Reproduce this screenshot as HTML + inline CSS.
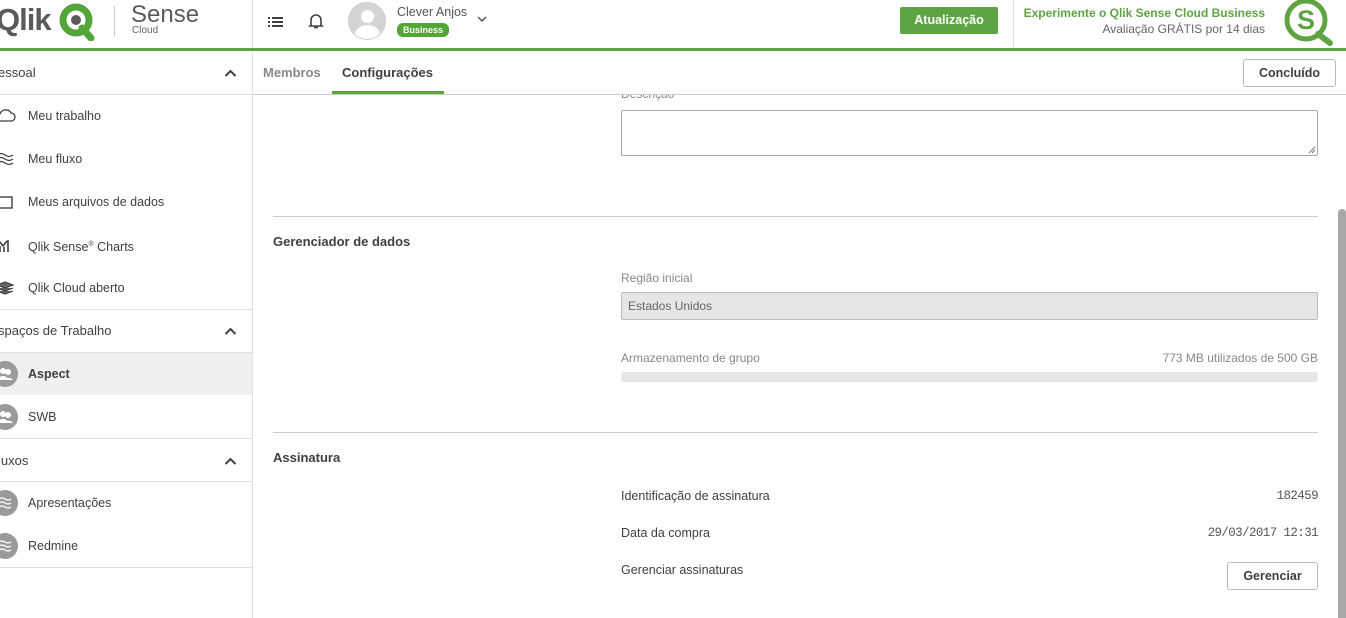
<!DOCTYPE html>
<html><head><meta charset="utf-8"><style>
*{margin:0;padding:0;box-sizing:border-box}
body{width:1346px;height:618px;overflow:hidden;background:#fff;font-family:"Liberation Sans",sans-serif;color:#404040;position:relative;font-size:13px}
.a{position:absolute;white-space:nowrap}
.hl{position:absolute;height:1px;background:#e0e0e0}
.vl{position:absolute;width:1px;background:#e0e0e0}
.nav{position:absolute;left:28px;font-size:12.5px;color:#404040}
.ic{position:absolute;left:-8px;width:26px;height:26px;border-radius:50%;background:#9a9a9a}
.lbl{font-size:12px;color:#888}
.chev{position:absolute;left:224px}
.mono{font-size:12.5px;letter-spacing:-0.6px;font-family:'Liberation Mono',monospace;color:#555}
</style></head><body>
<!-- header -->
<div class="a" style="left:-4px;top:2px;font-size:31px;font-weight:bold;color:#5a5a5a;letter-spacing:-1px">Qlik</div>
<svg class="a" style="left:58px;top:3px" width="40" height="38" viewBox="0 0 40 38"><circle cx="18" cy="17" r="13" fill="none" stroke="#52a536" stroke-width="7"/><path d="M24 25 L33 35" stroke="#52a536" stroke-width="7" stroke-linecap="round"/><circle cx="18" cy="17" r="5" fill="#5a5a5a"/></svg>
<div class="vl" style="left:114px;top:6px;height:30px;background:#ccc"></div>
<div class="a" style="left:131px;top:1px;font-size:24px;color:#5a5a5a">Sense</div>
<div class="a" style="left:132px;top:25px;font-size:10px;color:#666">Cloud</div>
<div class="vl" style="left:252px;top:0;height:48px"></div>
<svg class="a" style="left:268px;top:15px" width="16" height="14" viewBox="0 0 16 14"><g fill="#404040"><rect x="0" y="2" width="2" height="2"/><rect x="4" y="2" width="11" height="2"/><rect x="0" y="6" width="2" height="2"/><rect x="4" y="6" width="11" height="2"/><rect x="0" y="10" width="2" height="2"/><rect x="4" y="10" width="11" height="2"/></g></svg>
<svg class="a" style="left:308px;top:12px" width="16" height="18" viewBox="0 0 16 18"><path d="M3 13 V8 a5 5 0 0 1 10 0 V13 L14 14 H2 Z" fill="none" stroke="#404040" stroke-width="1.6"/><path d="M6 15.5 h4" stroke="#404040" stroke-width="1.6"/></svg>
<div class="a" style="left:348px;top:2px;width:38px;height:38px;border-radius:50%;background:#d4d4d4;overflow:hidden;border:1px solid #ccc"><div style="position:absolute;left:12px;top:7px;width:13px;height:13px;border-radius:50%;background:#fff"></div><div style="position:absolute;left:6px;top:22px;width:25px;height:20px;border-radius:50%;background:#fff"></div></div>
<div class="a" style="left:397px;top:5px;font-size:12.5px;color:#555">Clever Anjos</div>
<div class="a" style="left:397px;top:23px;background:#52a536;color:#fff;font-size:9px;font-weight:bold;padding:2px 6px;border-radius:6px">Business</div>
<svg class="a" style="left:477px;top:16px" width="10" height="7"><path d="M1 1 L5 5 L9 1" fill="none" stroke="#555" stroke-width="1.5"/></svg>
<div class="a" style="left:900px;top:7px;width:98px;height:27px;background:#5ea443;border-radius:2px;color:#fff;font-weight:bold;font-size:12.5px;text-align:center;line-height:27px">Atualização</div>
<div class="vl" style="left:1013px;top:0;height:48px"></div>
<div class="a" style="right:81px;top:6px;font-size:12px;font-weight:bold;color:#5ea443">Experimente o Qlik Sense Cloud Business</div>
<div class="a" style="right:81px;top:22px;font-size:12px;color:#666">Avaliação GRÁTIS por 14 dias</div>
<svg class="a" style="left:1282px;top:-2px" width="60" height="48" viewBox="0 0 60 48"><circle cx="24" cy="22" r="19" fill="none" stroke="#5ea443" stroke-width="5"/><path d="M36 36 L48 45" stroke="#5ea443" stroke-width="6" stroke-linecap="round"/><text x="24" y="31" text-anchor="middle" font-family="Liberation Sans" font-weight="bold" font-size="27" fill="#5ea443">S</text></svg>
<div class="a" style="left:0;top:48px;width:1346px;height:3px;background:#5ea443"></div>
<!-- sidebar -->
<div class="vl" style="left:252px;top:51px;height:567px"></div>
<div class="a" style="left:-2px;top:65px;font-size:13px">essoal</div>
<svg class="chev" style="top:69px" width="13" height="8"><path d="M1.5 7 L6.5 2 L11.5 7" fill="none" stroke="#404040" stroke-width="2"/></svg>
<div class="hl" style="left:0;top:94px;width:252px"></div>
<svg class="a" style="left:-6px;top:108px" width="22" height="16"><path d="M4 13 H17 a4 4 0 0 0 0-8 a6 6 0 0 0-11 1 a4 4 0 0 0-2 7z" fill="none" stroke="#404040" stroke-width="1.3"/></svg>
<div class="nav" style="top:109px">Meu trabalho</div>
<svg class="a" style="left:-4px;top:152px" width="18" height="14"><path d="M1 3 q4-3 8 0 t8 0 M1 7 q4-3 8 0 t8 0 M1 11 q4-3 8 0 t8 0" fill="none" stroke="#404040" stroke-width="1.3"/></svg>
<div class="nav" style="top:152px">Meu fluxo</div>
<svg class="a" style="left:-4px;top:195px" width="18" height="14"><rect x="1" y="2" width="15" height="11" fill="none" stroke="#404040" stroke-width="1.4"/></svg>
<div class="nav" style="top:195px">Meus arquivos de dados</div>
<svg class="a" style="left:-2px;top:238px" width="14" height="16"><path d="M1 3 L5 8 L9 3 M2 14 V8 M6 14 V9 M10 14 V2" fill="none" stroke="#404040" stroke-width="1.6"/></svg>
<div class="nav" style="top:240px">Qlik Sense<sup style="font-size:7px">®</sup> Charts</div>
<svg class="a" style="left:-4px;top:280px" width="20" height="16"><path d="M1 5 l8-3 8 3-8 3z M1 8 l8 3 8-3 M1 11 l8 3 8-3" fill="#666" stroke="#404040" stroke-width="1.2"/></svg>
<div class="nav" style="top:281px">Qlik Cloud aberto</div>
<div class="hl" style="left:0;top:309px;width:252px"></div>
<div class="a" style="left:-2px;top:323px;font-size:13px">spaços de Trabalho</div>
<svg class="chev" style="top:327px" width="13" height="8"><path d="M1.5 7 L6.5 2 L11.5 7" fill="none" stroke="#404040" stroke-width="2"/></svg>
<div class="hl" style="left:0;top:352px;width:252px"></div>
<div class="a" style="left:0;top:353px;width:252px;height:42px;background:#f0f0f0"></div>
<div class="ic" style="top:361px"></div>
<svg class="a" style="left:-2px;top:367px" width="16" height="14"><circle cx="5" cy="4" r="3" fill="#fff"/><circle cx="10" cy="5" r="3" fill="#fff"/><path d="M0 13 a5 4 0 0 1 10 0z M6 13 a5 4 0 0 1 9 0z" fill="#fff"/></svg>
<div class="nav" style="top:367px;font-weight:bold">Aspect</div>
<div class="ic" style="top:404px"></div>
<svg class="a" style="left:-2px;top:410px" width="16" height="14"><circle cx="5" cy="4" r="3" fill="#fff"/><circle cx="10" cy="5" r="3" fill="#fff"/><path d="M0 13 a5 4 0 0 1 10 0z M6 13 a5 4 0 0 1 9 0z" fill="#fff"/></svg>
<div class="nav" style="top:410px">SWB</div>
<div class="hl" style="left:0;top:438px;width:252px"></div>
<div class="a" style="left:-2px;top:453px;font-size:13px">luxos</div>
<svg class="chev" style="top:457px" width="13" height="8"><path d="M1.5 7 L6.5 2 L11.5 7" fill="none" stroke="#404040" stroke-width="2"/></svg>
<div class="hl" style="left:0;top:481px;width:252px"></div>
<div class="ic" style="top:490px"></div>
<svg class="a" style="left:-2px;top:497px" width="16" height="12"><path d="M1 2 q3-2 6 0 t6 0 M1 6 q3-2 6 0 t6 0 M1 10 q3-2 6 0 t6 0" fill="none" stroke="#fff" stroke-width="1.3"/></svg>
<div class="nav" style="top:496px">Apresentações</div>
<div class="ic" style="top:533px"></div>
<svg class="a" style="left:-2px;top:540px" width="16" height="12"><path d="M1 2 q3-2 6 0 t6 0 M1 6 q3-2 6 0 t6 0 M1 10 q3-2 6 0 t6 0" fill="none" stroke="#fff" stroke-width="1.3"/></svg>
<div class="nav" style="top:539px">Redmine</div>
<div class="hl" style="left:0;top:567px;width:252px"></div>
<!-- tabs -->
<div class="a" style="left:263px;top:65px;font-size:13px;font-weight:bold;color:#888">Membros</div>
<div class="a" style="left:342px;top:65px;font-size:13px;font-weight:bold;color:#404040">Configurações</div>
<div class="a" style="left:332px;top:91px;width:112px;height:3px;background:#5ea443"></div>
<div class="a" style="left:1243px;top:59px;width:93px;height:28px;border:1px solid #bbb;border-radius:3px;text-align:center;line-height:26px;font-weight:bold;font-size:12.5px">Concluído</div>
<div class="hl" style="left:253px;top:94px;width:1093px;background:#ccc"></div>
<!-- content -->
<div class="a" style="left:621px;top:95px;font-size:12px;color:#888;height:7px;overflow:hidden"><div style="margin-top:-8px">Descrição</div></div>
<div class="a" style="left:621px;top:110px;width:697px;height:46px;border:1px solid #aaa;border-radius:2px"></div>
<svg class="a" style="left:1308px;top:146px" width="8" height="8"><path d="M1 7 L7 1 M4 7 L7 4" stroke="#777" stroke-width="1"/></svg>
<div class="hl" style="left:273px;top:216px;width:1045px;background:#ccc"></div>
<div class="a" style="left:273px;top:234px;font-weight:bold;font-size:13px">Gerenciador de dados</div>
<div class="a lbl" style="left:621px;top:271px">Região inicial</div>
<div class="a" style="left:621px;top:292px;width:697px;height:28px;background:#e6e6e6;border:1px solid #bbb;border-radius:2px;font-size:12px;color:#666;line-height:26px;padding-left:6px">Estados Unidos</div>
<div class="a lbl" style="left:621px;top:351px">Armazenamento de grupo</div>
<div class="a lbl" style="right:28px;top:351px">773 MB utilizados de 500 GB</div>
<div class="a" style="left:621px;top:372px;width:697px;height:10px;background:#e6e6e6;border-radius:3px"></div>
<div class="hl" style="left:273px;top:432px;width:1045px;background:#ccc"></div>
<div class="a" style="left:273px;top:450px;font-weight:bold;font-size:13px">Assinatura</div>
<div class="a" style="left:621px;top:489px;font-size:12.5px">Identificação de assinatura</div>
<div class="a mono" style="right:28px;top:489px">182459</div>
<div class="a" style="left:621px;top:526px;font-size:12.5px">Data da compra</div>
<div class="a mono" style="right:28px;top:526px">29/03/2017 12:31</div>
<div class="a" style="left:621px;top:563px;font-size:12.5px">Gerenciar assinaturas</div>
<div class="a" style="left:1227px;top:562px;width:91px;height:28px;border:1px solid #bbb;border-radius:3px;text-align:center;line-height:26px;font-weight:bold;font-size:12.5px">Gerenciar</div>
<div class="a" style="left:1338px;top:209px;width:8px;height:409px;background:#a8a8a8;border-radius:4px 4px 0 0"></div>
</body></html>
